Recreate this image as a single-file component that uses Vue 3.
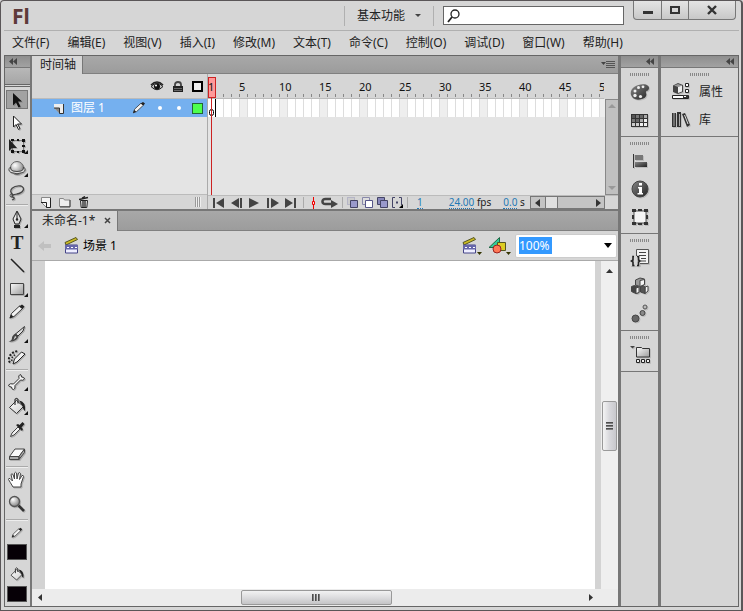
<script setup>
import { computed, onBeforeUnmount, onMounted, ref } from 'vue'

const menus = ['文件(F)', '编辑(E)', '视图(V)', '插入(I)', '修改(M)', '文本(T)', '命令(C)', '控制(O)', '调试(D)', '窗口(W)', '帮助(H)']

// Only as many frames are drawn as the ruler has room for.
const ruler = ref(null)
const frameCount = ref(50)
const frames = computed(() => Array.from({ length: frameCount.value }, (_, i) => i + 1))
let observer
const measure = () => { frameCount.value = Math.max(1, Math.ceil(ruler.value.clientWidth / 8)) }
onMounted(() => {
  measure()
  observer = new ResizeObserver(measure)
  observer.observe(ruler.value)
})
onBeforeUnmount(() => observer?.disconnect())

const pencil = '<path d="M3 16l1.500-4.500L12.500 4l3 2.500L7 14.500z" fill="#f2f2f2" stroke="#333"/><path d="M12 4.500L15 2.500l2.500 2-2 2.500zM2.500 16.500l1.500-4 2.500 2z" fill="#222"/>'
const bucket = '<path d="M2.500 11.500l7-7 7 6-7 7z" fill="url(#pale)" stroke="#333"/><path d="M8 9V3.500q1.500-2.500 3 0v4" fill="none" stroke="#333" stroke-width="1.200"/><path d="M12 4.500q7 1 6 10.500-2-1-2.500-5z" fill="#222"/>'

const icons = {
  select: '<path d="M6 2v12.500l3-3 2.500 5 2-1-2.500-5h4z" fill="#111"/>',
  subselect: '<path d="M6.500 3v11l2.500-2.500 2.500 5 1.500-1-2.500-4.500h4z" fill="#fff" stroke="#222"/>',
  transform: '<path d="M5.500 4.500h11v11h-11z" fill="none" stroke="#222" stroke-dasharray="1 1"/><path d="M2 3v12l3-3h5z" fill="#222"/><path d="M4 3h3v2H4zM10 3h2v2h-2zM15 3h3v3h-3zM15 9h3v2h-3zM15 14h3v3h-3zM10 15h2v2h-2zM4 14h3v3H4z" fill="#111"/>',
  rotate3d: '<circle cx="10" cy="9" r="6.500" fill="url(#ball)" stroke="#666"/><path d="M3.500 8Q0 11 4 13.500q6 2.500 12 0Q20 11 16.500 8q.500 3-2.500 4-4 1-8 0-3-1-2.500-4z" fill="#ddd" stroke="#444"/>',
  lasso: '<path d="M6 13C0 8 7 3 14 4c5 2 2 7-4 8-3 1-5 0-5 2s3 1 2 3l-2 1" fill="none" stroke="#444" stroke-width="1.300"/><circle cx="4.500" cy="13.500" r="1.500" fill="none" stroke="#444"/>',
  pen: '<path d="M10 1L6 9l2 5h4l2-5z" fill="url(#pale)" stroke="#222"/><path d="M10 2v7" stroke="#222"/><circle cx="10" cy="9.500" r="1.200" fill="#222"/><path d="M7 15h6v3H7z" fill="#222"/>',
  line: '<path d="M4 3l13 13" stroke="#222" stroke-width="1.400"/>',
  rect: '<path d="M3.500 4.500h13v11h-13z" fill="url(#face)" stroke="#444"/>',
  pencil,
  brush: '<path d="M17.500 1.500L16 6l-5 5-2.500-2z" fill="#ddd" stroke="#333"/><path d="M8.500 8.500l3 3Q9 17.500 1.500 16.500q3.500-1 3.500-3.500t3.500-4.500z" fill="#444"/><path d="M8 11l1.500 1-3 3z" fill="#ddd"/>',
  deco: '<path d="M6 16l1.500-5L14.500 4l3.500 2-8 8z" fill="#f2f2f2" stroke="#222"/><path d="M3 14.500C0 11 3 4 11 3" fill="none" stroke="#222" stroke-width="2" stroke-dasharray="2 1.500"/><path d="M5 13C4 10 6 7.500 9 6.500" fill="none" stroke="#222" stroke-width="1.500" stroke-dasharray="1.500 1.500"/>',
  bone: '<path d="M6.500 12L12 6.500Q11 3.500 13 2.500q1.500 0 1.500 2.500 3 0 3 2-1.500 2-4 1L8 13.500q.500 3.500-1.500 4-2 0-2-2.500-3 0-3-2Q3 11 6.500 12z" fill="#f4f4f4" stroke="#333"/>',
  bucket,
  dropper: '<path d="M3.500 16.500L5 13l6-6 2 2-6 6z" fill="#f0f0f0" stroke="#444"/><path d="M9 5l6 6 1-2-1.500-1.500 3-3.500-2-2-3 3L11 4z" fill="#222"/>',
  eraser: '<path d="M2.500 12.500L8 5h9.500L12 12.500z" fill="#fafafa" stroke="#444"/><path d="M2.500 12.500v3H12v-3zM12 15.500l5.500-7V5L12 12.500z" fill="#aaa" stroke="#444"/>',
  hand: '<path d="M6 17Q3 12 1.500 9.500 1.500 8 3 8.500L5.500 11 4 4.500Q5 3 6 4.500L7.500 9V3q1-1.500 2 0l.500 6 1.500-6q1.500-1 2 .500L12.500 9.500 15 5.500q1.500-.500 1.500 1L14 14v3z" fill="#fff" stroke="#444"/>',
  zoom: '<circle cx="7.500" cy="7.500" r="5" fill="url(#ball)" stroke="#555" stroke-width="1.300"/><path d="M11.500 11.500l5.500 5.500" stroke="#333" stroke-width="2.600"/>',
  // dock panels
  palette: '<path d="M1 13C-1 6 8 1 16 2.500q5 2 2 6-2.500 0-2 2.500 2 5-6 6.500Q3 18.500 1 13z" fill="url(#dark)"/><g fill="#eee"><circle cx="5" cy="9" r="1.500"/><circle cx="8.500" cy="5.500" r="1.500"/><circle cx="13" cy="4.800" r="1.400"/><circle cx="5" cy="13.500" r="1.700"/><circle cx="10.500" cy="14.500" r="1.600"/></g>',
  swatches: '<path d="M1 4h17v13H1z" fill="#333"/><g><path d="M2 5h3v3H2z" fill="#555"/><path d="M6 5h3v3H6zM2 9h3v3H2z" fill="#777"/><path d="M10 5h3v3h-3zM6 9h3v3H6z" fill="#666"/><path d="M14 5h3v3h-3zM10 9h3v3h-3z" fill="#aaa"/><path d="M14 9h3v3h-3zM10 13h3v3h-3zM14 13h3v3h-3z" fill="#eee"/><path d="M2 13h3v3H2zM6 13h3v3H6z" fill="#ccc"/></g>',
  align: '<path d="M3.500 3v14" stroke="#333"/><path d="M5 4h8v5H5z" fill="#777"/><path d="M5 11h12v5H5z" fill="url(#dark)"/>',
  info: '<circle cx="10" cy="10" r="8" fill="url(#dark)" stroke="#444"/><path d="M9 4h3v2.500H9zM8 8h4v6h1v1.500H7.500V14H9V9.500H8z" fill="#fff"/>',
  transformPanel: '<path d="M4 4h12v12H4z" fill="#f4f4f4" stroke="#555"/><path d="M2 2h4v3H2zM8 2h4v2H8zM14 2h4v3h-4zM2 8h2v4H2zM16 8h2v4h-2zM2 15h4v3H2zM8 16h4v2H8zM14 15h4v3h-4z" fill="#333"/>',
  code: '<path d="M6.500 1.500h12v14H6.500z" fill="#f4f4f4" stroke="#555"/><path d="M9 4.500h7M9 7.500h7M11 10.500h5M11 13h5" stroke="#444"/><path d="M0 8h10v10H0z" fill="#d6d6d6"/><path d="M4 8.500H3V12l-1.500 1L3 14v3.500h1.500M7 8.500h1.500V12l1.500 1-1.500 1v3.500H7" fill="none" stroke="#222" stroke-width="1.600"/>',
  components: '<g stroke="#444"><path d="M5.500 4l4.500-2 4.500 1v5.500L10 10.500 5.500 9z" fill="#999"/><path d="M10 4.500l4.500-1v5l-4.500 2z" fill="#f4f4f4"/><path d="M1.500 10.500l3-1 4.500 1.500v5.500L6 17.500l-4.500-2z" fill="#444"/><path d="M6 12l3-1v5.500l-3 1zM15 11l3-1v5l-3 2.500z" fill="#f4f4f4"/><path d="M10.500 11l3-1 1.500 1v6.500l-4.500-1.500z" fill="#555"/></g>',
  motion: '<circle cx="5.500" cy="14.500" r="3.500" fill="#666" stroke="#444"/><circle cx="12.500" cy="9" r="2.500" fill="#888" stroke="#444"/><circle cx="15" cy="3" r="2" fill="#bbb" stroke="#555"/>',
  project: '<path d="M0 1h5L2.500 3.500z" fill="#444"/><path d="M6.500 12V2.500h5l1 1h7V12z" fill="url(#face)" stroke="#333"/><path d="M6.500 14.500h3v3h-3zM11.500 14.500h3v3h-3zM16.500 14.500h3v3h-3z" fill="#eee" stroke="#222"/>',
  properties: '<path d="M2 3.500L7 1l5 2v7l-5 2-5-2z" fill="#444"/><path d="M3 3.500L7 2l4 1.500L7 5z" fill="#999"/><path d="M7 5l4-1.500v6L7 11z" fill="#eee"/><path d="M14.500 1.500h3v3h-3zM14.500 7.500h3v3h-3zM1.500 13.500h16v3h-16z" fill="#fff" stroke="#222"/><path d="M12 13h5v3h-5z" fill="#333"/><path d="M13 14.500h2" stroke="#fff"/>',
  library: '<path d="M1 3h4v14H1zM6 2h4v15H6z" fill="#333"/><path d="M3 3v13M8.500 4v12" stroke="#aaa"/><path d="M11 4l3-1 5 12-3 2z" fill="#333"/><path d="M13.500 5l3.500 9" stroke="#ddd"/>',
}

const toolGroups = [
  { name: 'pick', tools: [['select', '选择'], ['subselect', '部分选取'], ['transform', '任意变形', 1], ['rotate3d', '3D 旋转', 1], ['lasso', '套索']] },
  { name: 'draw', tools: [['pen', '钢笔', 1], ['text', '文本'], ['line', '线条'], ['rect', '矩形', 1], ['pencil', '铅笔'], ['brush', '刷子', 1], ['deco', 'Deco']] },
  { name: 'paint', tools: [['bone', '骨骼', 1], ['bucket', '颜料桶', 1], ['dropper', '滴管'], ['eraser', '橡皮擦']] },
  { name: 'view', tools: [['hand', '手形'], ['zoom', '缩放']] },
]

const dockGroups = [
  [['palette', '颜色'], ['swatches', '样本']],
  [['align', '对齐'], ['info', '信息'], ['transformPanel', '变形']],
  [['code', '代码片断'], ['components', '组件'], ['motion', '动画预设']],
  [['project', '项目']],
]
</script>

<template>
  <div class="window">
    <svg class="defs" width="0" height="0" aria-hidden="true">
      <defs>
        <linearGradient id="face" x1="0" y1="0" x2="1" y2="1"><stop offset="0" stop-color="#fafafa" /><stop offset="1" stop-color="#9c9c9c" /></linearGradient>
        <linearGradient id="pale" x1="0" y1="0" x2="1" y2="1"><stop offset="0" stop-color="#fff" /><stop offset="1" stop-color="#ccc" /></linearGradient>
        <linearGradient id="dark" x1="0" y1="0" x2="1" y2="1"><stop offset="0" stop-color="#888" /><stop offset="1" stop-color="#222" /></linearGradient>
        <radialGradient id="ball" cx=".35" cy=".3" r=".8"><stop offset="0" stop-color="#fff" /><stop offset="1" stop-color="#777" /></radialGradient>
      </defs>
    </svg>

    <header class="titlebar">
      <span class="logo">Fl</span>
      <button class="workspace-switch">基本功能<i class="caret"></i></button>
      <label class="search">
        <svg width="16" height="16" viewBox="0 0 16 16"><circle cx="9" cy="6" r="4" fill="#fff" stroke="#222" stroke-width="1.300" /><path d="M6 9l-4 5" stroke="#222" stroke-width="1.800" /></svg>
        <input type="text" aria-label="搜索" />
      </label>
      <div class="winbuttons">
        <button aria-label="最小化"><svg width="12" height="10"><path d="M1 6h10v3H1z" fill="#333" /></svg></button>
        <button aria-label="最大化"><svg width="12" height="10"><path d="M2 2h8v6H2z" fill="none" stroke="#333" stroke-width="2" /></svg></button>
        <button aria-label="关闭"><svg width="12" height="10"><path d="M2 1l8 8M10 1L2 9" stroke="#333" stroke-width="2.400" /></svg></button>
      </div>
    </header>

    <nav class="menubar">
      <button v-for="m in menus" :key="m">{{ m }}</button>
    </nav>

    <div class="body">
      <aside class="toolbar">
        <div class="collapse left"><svg width="8" height="7"><path d="M4 0v7L0 3.500zM8 0v7L4 3.500z" fill="#444" /></svg></div>
        <div class="grab"></div>
        <div class="tools">
          <div v-for="g in toolGroups" :key="g.name" class="group" :class="g.name">
            <button v-for="t in g.tools" :key="t[0]" class="tool" :class="{ active: t[0] === 'select' }" :aria-label="t[1]">
              <span v-if="t[0] === 'text'" class="glyph">T</span>
              <svg v-else width="20" height="20" viewBox="0 0 20 20" v-html="icons[t[0]]"></svg>
              <i v-if="t[2]" class="more"></i>
            </button>
          </div>
          <div class="colors">
            <svg width="14" height="14" viewBox="0 0 20 20" v-html="icons.pencil"></svg>
            <button class="swatch" aria-label="笔触颜色"></button>
            <svg width="16" height="16" viewBox="0 0 20 20" v-html="icons.bucket"></svg>
            <button class="swatch" aria-label="填充颜色"></button>
          </div>
        </div>
      </aside>

      <main class="center">
        <section class="timeline">
          <div class="tabs">
            <button class="tab">时间轴</button>
            <svg class="panelmenu" width="14" height="9"><path d="M0 2h5L2.500 5z" fill="#444" /><path d="M5 1.500h9M5 3.500h9M5 5.500h9M5 7.500h9" stroke="#555" /></svg>
          </div>
          <div class="tl-main">
            <div class="layers">
              <div class="layer-head">
                <svg width="14" height="12" viewBox="0 0 14 12"><path d="M1 5.500Q7-1 13 5.500 7 12 1 5.500z" fill="#bbb" stroke="#222" /><path d="M1 4Q7-2 13 4" fill="none" stroke="#222" stroke-width="1.600" /><circle cx="7" cy="5.500" r="3" fill="#111" /><circle cx="6" cy="4.500" r="1" fill="#fff" /></svg>
                <svg width="10" height="12" viewBox="0 0 10 12"><path d="M2 6V3.500q0-2.500 3-2.500t3 2.500V6" fill="none" stroke="#444" stroke-width="1.800" /><path d="M0 5h10v6H0z" fill="#222" /><path d="M1 7.500h8M1 9.500h8" stroke="#666" /></svg>
                <i class="outline"></i>
              </div>
              <div class="layer">
                <svg width="12" height="12" viewBox="0 0 12 12"><path d="M1 2h9.500v9.500H7L1 6z" fill="#eee" /><path d="M1 6h5.500v5.500z" fill="#888" /><path d="M1 6h5.500v5.500M10.500 2v9.500H6.500" fill="none" stroke="#333" /></svg>
                <span class="layer-name">图层 1</span>
                <svg width="16" height="16" viewBox="0 0 20 20" v-html="icons.pencil"></svg>
                <i class="dot"></i><i class="dot"></i><i class="outline green"></i>
              </div>
              <div class="layer-blank"></div>
              <div class="layer-tools">
                <button aria-label="新建图层"><svg width="10" height="11"><path d="M.500.500h9v10h-4l-5-5z" fill="#f4f4f4" stroke="#888" /><path d="M0 5.500h5.500v5M9.500 1v9.500h-4" fill="none" stroke="#222" /></svg></button>
                <button aria-label="新建文件夹"><svg width="12" height="11"><path d="M.500 9.500v-8h4l1 1.500h5.500v6.500z" fill="#eee" stroke="#888" /><path d="M11 3v7H1" fill="none" stroke="#444" /></svg></button>
                <button aria-label="删除"><svg width="10" height="12"><path d="M1.500 4.500h7l-.700 7H2.200z" fill="#eee" stroke="#222" /><path d="M0 3.500l9-2M3 2l3-1.500M4 5v6M6 5v6" stroke="#222" stroke-width="1.300" /></svg></button>
                <i class="grip"></i>
              </div>
            </div>

            <div class="frames">
              <div ref="ruler" class="ruler">
                <span v-for="n in frames" :key="n" class="tick"><b v-if="n === 1 || n % 5 === 0">{{ n }}</b></span>
              </div>
              <div class="frames-body">
                <div class="track">
                  <div class="cells">
                    <span v-for="n in frames" :key="n" class="cell" :class="{ fifth: n % 5 === 0, key: n === 1 }"></span>
                  </div>
                </div>
                <div class="vscroll"><i class="up"></i><i class="down"></i></div>
              </div>
              <div class="playhead"></div>
              <div class="controls">
                <div class="play">
                  <button aria-label="转到第一帧"><svg width="12" height="10"><path d="M0 0h2v10H0zM11 0v10L3 5z" fill="#444" /></svg></button>
                  <button aria-label="后退一帧"><svg width="12" height="10"><path d="M8 0v10L0 5zM9 0h2v10H9z" fill="#444" /></svg></button>
                  <button aria-label="播放"><svg width="12" height="10"><path d="M0 0v10l10-5z" fill="#444" /></svg></button>
                  <button aria-label="前进一帧"><svg width="12" height="10"><path d="M0 0h2v10H0zM4 0v10l8-5z" fill="#444" /></svg></button>
                  <button aria-label="转到最后一帧"><svg width="12" height="10"><path d="M0 0v10l8-5zM9 0h2v10H9z" fill="#444" /></svg></button>
                </div>
                <i class="bar"></i>
                <div class="loop">
                  <svg width="5" height="12"><path d="M2.500 0v12" stroke="#e00" /><path d="M1.500 4.500h2v3h-2z" fill="#fdd" stroke="#e00" /></svg>
                  <svg width="17" height="11"><path d="M12 7H4.500Q1.500 7 1.500 4.500T4.500 2H10" fill="none" stroke="#444" stroke-width="2.600" /><path d="M10 3l7 4-7 4z" fill="#444" /></svg>
                </div>
                <i class="bar"></i>
                <div class="onion">
                  <svg width="11" height="11"><path d="M.500.500h7v7h-7z" fill="#ccc" stroke="#99b" stroke-dasharray="1 1" /><path d="M3.500 3.500h7v7h-7z" fill="#99c" stroke="#446" /></svg>
                  <svg width="11" height="11"><path d="M.500.500h7v7h-7z" fill="#ddd" stroke="#88a" /><path d="M3.500 3.500h7v7h-7z" fill="#fff" stroke="#558" /></svg>
                  <svg width="11" height="11"><path d="M.500.500h7v7h-7z" fill="#88b" stroke="#446" /><path d="M3.500 3.500h7v7h-7z" fill="#99c" stroke="#446" /></svg>
                  <svg width="11" height="11"><path d="M3 .500H.500v10H3M7 .500h2.500V8" fill="none" stroke="#446" /><path d="M4 4.500h2v2H4z" fill="#446" /><path d="M11 7v4H7z" fill="#000" /></svg>
                </div>
                <i class="bar"></i>
                <div class="stats"><a href="#frame">1</a><span><a href="#fps">24.00</a> fps</span><span><a href="#time">0.0</a> s</span></div>
                <div class="hscroll"><i class="la"></i><i class="th"></i><i class="ra"></i></div>
              </div>
            </div>
          </div>
        </section>

        <section class="document">
          <div class="tabs">
            <button class="tab doc">未命名-1*<svg width="7" height="7"><path d="M1 1l5 5M6 1L1 6" stroke="#444" stroke-width="1.500" /></svg></button>
          </div>
          <div class="scenebar">
            <svg width="14" height="10"><path d="M0 5l6-5v3h7v4H6v3z" fill="#c0c0c0" /></svg>
            <svg width="16" height="17" viewBox="0 0 16 17"><path d="M1 5.500L12 .500l1.500 2L2 8z" fill="#cb2" stroke="#552" /><path d="M1.500 8h12v8h-12z" fill="#eef" stroke="#448" /><path d="M1 8h13v4.500H1z" fill="#66a" /><path d="M3 10.500h2m2 0h2m2 0h2" stroke="#fff" /></svg>
            <span class="scene">场景 1</span>
            <button class="edit" aria-label="编辑场景"><svg width="20" height="18" viewBox="0 0 20 18"><path d="M1 5.500L12 .500l1.500 2L2 8z" fill="#cb2" stroke="#552" /><path d="M1.500 8h12v8h-12z" fill="#eef" stroke="#448" /><path d="M1 8h13v4.500H1z" fill="#66a" /><path d="M3 10.500h2m2 0h2m2 0h2" stroke="#fff" /><path d="M15 15h5l-2.500 3z" fill="#330" /></svg></button>
            <button class="edit" aria-label="编辑元件"><svg width="22" height="18" viewBox="0 0 22 18"><path d="M0 10.500L10.500.500v10z" fill="#3c9" stroke="#264" /><path d="M8.500 5.500h8v8h-8z" fill="#dc2" stroke="#552" /><circle cx="8" cy="12" r="4" fill="#f75" stroke="#922" /><path d="M17 15h5l-2.500 3z" fill="#330" /></svg></button>
            <div class="zoombox">
              <input type="text" value="100%" aria-label="缩放比例" />
              <button aria-label="选择缩放"><svg width="8" height="5"><path d="M0 0h8L4 5z" fill="#000" /></svg></button>
            </div>
          </div>
          <div class="stage-area">
            <div class="stage"></div>
            <div class="sv">
              <svg width="8" height="5"><path d="M0 4h7L3.500 0z" fill="#333" /></svg>
              <div class="thumb v"><i></i><i></i><i></i></div>
            </div>
          </div>
          <div class="sh">
            <svg width="5" height="8"><path d="M4 0v7L0 3.500z" fill="#333" /></svg>
            <div class="thumb h"><i></i><i></i><i></i></div>
            <svg width="5" height="8"><path d="M0 0v7l4-3.500z" fill="#333" /></svg>
          </div>
        </section>
      </main>

      <aside class="dock narrow">
        <div class="collapse"><svg width="8" height="7"><path d="M4 0v7L0 3.500zM8 0v7L4 3.500z" fill="#444" /></svg></div>
        <div v-for="(g, i) in dockGroups" :key="i" class="dgroup">
          <i class="handle"></i>
          <button v-for="p in g" :key="p[0]" :aria-label="p[1]"><svg width="20" height="20" viewBox="0 0 20 20" v-html="icons[p[0]]"></svg></button>
        </div>
      </aside>
      <aside class="dock wide">
        <div class="collapse"><svg width="8" height="7"><path d="M4 0v7L0 3.500zM8 0v7L4 3.500z" fill="#444" /></svg></div>
        <div class="dgroup">
          <i class="handle"></i>
          <button><svg width="20" height="20" viewBox="0 0 20 20" v-html="icons.properties"></svg>属性</button>
          <button><svg width="20" height="20" viewBox="0 0 20 20" v-html="icons.library"></svg>库</button>
        </div>
      </aside>
    </div>
  </div>
</template>

<style>
body { margin: 0; background: #d6d6d6; }
</style>

<style scoped>
*, ::after { box-sizing: border-box; }
.window {
  display: flex; flex-direction: column; height: 100vh; min-height: 600px;
  padding: 0 2px 3px 3px; background: #d6d6d6; color: #222;
  border: 1px solid #5a5658; border-right-width: 2px; border-radius: 4px 4px 0 0;
  font: 12px/16px "Noto Sans", "Noto Sans CJK SC", sans-serif;
}
.defs { position: absolute; }
svg { display: block; flex: none; }
button { font: inherit; color: inherit; background: none; border: 0; padding: 0; margin: 0; white-space: nowrap; }
input { font: inherit; border: 0; padding: 0; outline: 0; min-width: 0; }
i { display: block; flex: none; }

.titlebar { display: flex; height: 30px; flex: none; align-items: center; border-bottom: 1px solid #b0b0b0; }
.logo { margin-left: 8px; font-size: 21px; line-height: 28px; font-weight: 700; color: #5e3a3a; }
.workspace-switch { display: flex; align-items: center; gap: 10px; height: 20px; margin-left: auto; padding: 0 12px 0 12px; border: solid #b0b0b0; border-width: 0 1px; }
.caret { border: 3px solid transparent; border-top-color: #444; border-bottom: 0; }
.search { display: flex; align-items: center; width: 181px; height: 19px; margin-left: 9px; padding-left: 2px; background: #fff; border: 1px solid #666; }
.search input { flex: 1; background: none; }
.winbuttons { display: flex; align-self: flex-start; height: 19px; margin: 0 3px 0 9px; border: 1px solid #777; border-top: 0; border-radius: 0 0 4px 4px; background: linear-gradient(#e4e4e4, #c8c8c8); }
.winbuttons button { display: grid; place-items: center; width: 27px; }
.winbuttons button + button { border-left: 1px solid #777; }
.winbuttons button:last-child { width: 47px; }

.menubar { display: flex; flex: none; height: 24px; gap: 18px; padding-left: 8px; align-items: center; }

.body { display: flex; flex: 1; min-height: 0; border: 1px solid #666; }
.collapse { display: flex; flex: none; justify-content: flex-end; align-items: center; height: 12px; padding: 0 4px; background: linear-gradient(#8e8e8e, #a2a2a2); border-bottom: 1px solid #777; }
.collapse.left { justify-content: flex-start; }

.toolbar { width: 27px; flex: none; display: flex; flex-direction: column; border-right: 2px solid #777; }
.grab { height: 17px; flex: none; background: linear-gradient(#b8b8b8, #a6a6a6); border-bottom: 1px solid #666; }
.tools { flex: 1; margin-top: 1px; padding: 1px 2px 0 0; border-top: 1px solid #666; }
.tools svg { filter: drop-shadow(1px 1px 0 rgb(0 0 0 / 18%)); }
.group { display: flex; flex-direction: column; border-bottom: 1px solid #aaa; box-shadow: 0 1px #eee; margin: 0 0 0 1px; }
.tool { position: relative; display: grid; place-items: center; height: 23px; }
.pick { padding-bottom: 1px; }
.draw { padding-top: 3px; }
.paint .tool, .view .tool { height: 24px; }
.view { padding: 1px 0 3px; }
.tool.active { height: 19px; margin: 2px 0; background: #a2a2a2; border: 1px solid #777; }
.glyph { font: 700 19px/20px "Liberation Serif", serif; }
.more { position: absolute; right: 0; bottom: 3px; border: 2px solid #111; border-top-color: transparent; border-left-color: transparent; }
.colors { display: flex; flex-direction: column; align-items: center; gap: 4px; padding-top: 5px; }
.swatch { width: 20px; height: 16px; background: #060006; border: 1px solid #555; }
.colors svg { margin-top: 1px; }
.swatch + svg { margin-top: 2px; }

.center { flex: 1; min-width: 0; display: flex; flex-direction: column; border-right: 3px solid #777; }
.tabs { display: flex; align-items: center; height: 18px; background: linear-gradient(#a8a8a8, #9c9c9c); border-bottom: 1px solid #808080; }
.tab { height: 18px; padding: 0 6px 0 8px; background: #d6d6d6; border-right: 1px solid #777; }
.panelmenu { margin: 0 3px 0 auto; }
.timeline { flex: none; border-bottom: 2px solid #777; }
.tl-main { display: flex; height: 135px; }
.layers { width: 175px; flex: none; display: flex; flex-direction: column; }
.layer-head { display: flex; align-items: center; justify-content: flex-end; height: 25px; gap: 9px; padding: 1px 4px 0 0; border-bottom: 1px solid #bbb; }
.outline { width: 11px; height: 11px; border: 2px solid #000; background: #eee; }
.outline.green { border: 1px solid #263; background: #4dff4d; }
.layer { display: flex; align-items: center; height: 18px; padding: 0 4px 0 21px; background: #75b0ef; color: #fff; }
.layer-name { flex: 1; padding-left: 6px; line-height: 18px; }
.dot { width: 4px; height: 4px; border-radius: 2px; background: #fff; margin-left: 15px; }
.dot + .outline { margin-left: 11px; }
.dot:first-of-type { margin-left: 11px; }
.layer-blank { flex: 1; background: #e4e4e4; border-bottom: 1px solid #bbb; }
.layer-tools { display: flex; align-items: center; height: 14px; gap: 8px; padding: 0 6px 0 9px; }
.grip { width: 6px; height: 10px; margin-left: auto; background: repeating-linear-gradient(90deg, #999 0 1px, #eee 1px 2px); }

.frames { position: relative; flex: 1; min-width: 0; display: flex; flex-direction: column; border-left: 1px solid #aaa; }
.ruler { display: flex; height: 25px; margin-right: 14px; overflow: hidden; border-bottom: 1px solid #bbb; }
.tick { width: 8px; height: 24px; flex: none; background: linear-gradient(#888, #888) 100% 20px / 1px 3px no-repeat; }
.tick b { display: block; padding-top: 5px; margin-left: -1px; font-weight: 400; font-size: 11px; color: #111; }
.tick:first-child { background: #f99; margin-top: 3px; height: 21px; border: 1px solid #c22; }
.tick:first-child b { padding: 1px 0 0; }
.frames-body { display: flex; flex: 1; min-height: 0; }
.track { flex: 1; min-width: 0; background: #e4e4e4; }
.cells { display: flex; height: 18px; overflow: hidden; background: #fff; }
.cell { width: 8px; flex: none; border-right: 1px solid #ddd; }
.fifth { background: #eee; }
.key { display: grid; place-items: end center; border-right: 1px solid #000; padding-bottom: 1px; }
.key::after { content: ""; width: 5px; height: 7px; border: 1px solid #000; border-radius: 3px; }
.playhead { position: absolute; left: 3px; top: 24px; bottom: 14px; width: 1px; background: #c22; }
.vscroll { width: 13px; display: flex; flex-direction: column; justify-content: space-between; align-items: center; padding: 4px 0; background: #c0c0c0; border: 1px solid #888; border-right: 0; }
.up, .down { border: 4px solid transparent; }
.up { border-top: 0; border-bottom-color: #999; }
.down { border-bottom: 0; border-top-color: #999; }
.controls { display: flex; align-items: center; height: 14px; padding: 0 13px 0 5px; border-top: 1px solid #bbb; font-size: 10px; line-height: 11px; }
.play { display: flex; gap: 6px; }
.bar { width: 1px; height: 11px; background: #aaa; }
.play + .bar { margin-left: 6px; }
.loop { display: flex; align-items: center; gap: 5px; padding: 0 4px 0 7px; }
.onion { display: flex; gap: 4px; padding: 0 4px; }
.stats { flex: 1; display: flex; gap: 12px; padding-left: 9px; white-space: nowrap; }
.stats a { display: inline-block; height: 12px; color: #2479b5; text-decoration: none; border-bottom: 1px dotted #2479b5; }
.stats > a { margin-right: 14px; }
.hscroll { display: flex; align-items: center; width: 75px; height: 13px; border: 1px solid #777; background: #c4c4c4; }
.la, .ra { border: 4px solid transparent; }
.la { border-left: 0; border-right: 5px solid #333; margin: 0 5px 0 4px; }
.ra { border-right: 0; border-left: 5px solid #333; margin: 0 3px 0 auto; }
.th { width: 13px; height: 11px; background: #e0e0e0; border: solid #777; border-width: 0 1px; }

.document { flex: 1; min-height: 0; display: flex; flex-direction: column; }
.document .tabs { height: 20px; flex: none; }
.tab.doc { display: flex; align-items: center; gap: 9px; height: 20px; padding: 0 6px 0 10px; }
.scenebar { display: flex; flex: none; align-items: center; height: 30px; padding: 0 1px 0 6px; border-bottom: 1px solid #aaa; }
.scenebar svg + svg { margin-left: 12px; }
.scene { flex: 1; padding-left: 3px; color: #000; }
.edit { margin-right: 7px; }
.edit + .edit { margin-right: 4px; }
.zoombox { display: flex; align-items: center; justify-content: space-between; width: 102px; height: 24px; padding: 0 4px 0 3px; background: #fff; border: 1px solid #ccc; border-radius: 2px; }
.zoombox input { width: 33px; height: 17px; background: #39f; color: #fff; }
.stage-area { display: flex; flex: 1; min-height: 0; }
.stage { flex: 1; background: #fff; border: solid #d3d3d3; border-width: 0 6px 0 13px; }
.sv { width: 17px; display: flex; flex-direction: column; align-items: center; padding-top: 8px; background: #efefef; }
.thumb { display: flex; align-items: center; justify-content: center; gap: 1px; border: 1px solid #999; border-radius: 2px; }
.thumb.v { flex-direction: column; width: 15px; height: 50px; margin-top: 127px; background: linear-gradient(90deg, #f4f4f4, #d8d8dc 50%, #c8c8cc); }
.thumb.v i { width: 7px; height: 2px; background: linear-gradient(#333, #999); }
.sh { display: flex; flex: none; align-items: center; justify-content: space-between; height: 17px; padding: 0 24px 0 6px; background: #ececec; }
.thumb.h { width: 151px; height: 15px; background: linear-gradient(#f2f2f2, #dcdcde 50%, #c4c4c6); }
.thumb.h i { width: 2px; height: 7px; background: linear-gradient(90deg, #333, #999); }

.dock { flex: none; display: flex; flex-direction: column; }
.dock button svg { filter: drop-shadow(1px 1px 0 rgb(0 0 0 / 12%)); }
.narrow { width: 40px; border-right: 3px solid #777; }
.wide { width: 77px; }
.dgroup { display: flex; flex-direction: column; align-items: center; border-bottom: 1px solid #777; padding-bottom: 2px; }
.handle { width: 20px; height: 3px; margin: 5px 0 2px; background: repeating-linear-gradient(90deg, #888 0 1px, #d6d6d6 1px 2px); }
.dgroup button { display: flex; align-items: center; height: 28px; }
.wide .dgroup button { align-self: stretch; gap: 8px; padding-left: 10px; }
</style>
